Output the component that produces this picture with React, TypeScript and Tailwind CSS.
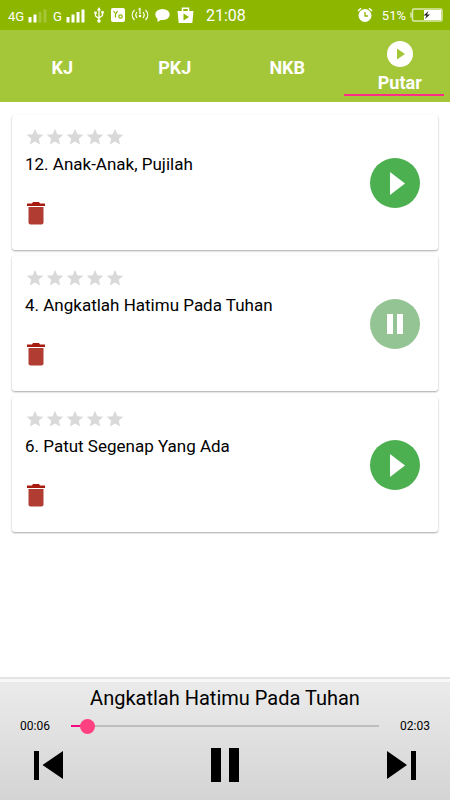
import { useState } from "react";

interface Song {
  id: number;
  number: number;
  title: string;
  playing: boolean;
}

const songs: Song[] = [
  { id: 1, number: 12, title: "Anak-Anak, Pujilah", playing: false },
  { id: 2, number: 4, title: "Angkatlah Hatimu Pada Tuhan", playing: true },
  { id: 3, number: 6, title: "Patut Segenap Yang Ada", playing: false },
];

const books = ["KJ", "PKJ", "NKB"];

const formatTime = (s: number) =>
  `${String(Math.floor(s / 60)).padStart(2, "0")}:${String(s % 60).padStart(2, "0")}`;

function Signal({ level }: { level: number }) {
  return (
    <svg width="19" height="18" viewBox="0 0 19 18" fill="#fff">
      {[0, 1, 2, 3].map((i) => (
        <rect key={i} x={i * 5 + 0.5} y={11 - i * 2.5} width="3" height={5.5 + i * 2.5} opacity={i < level ? 1 : 0.22} />
      ))}
    </svg>
  );
}

function StatusBar() {
  return (
    <div className="flex h-[30px] items-center bg-[#8db600] pl-2 pr-[7px] text-[13px] text-white">
      <span className="w-5 pt-1">4G</span>
      <Signal level={2} />
      <span className="ml-[6px] w-[13px] pt-1">G</span>
      <Signal level={4} />
      {/* usb */}
      <svg className="ml-2" width="12" height="16" viewBox="0 0 12 16" fill="none" stroke="#fff" strokeWidth="1.3">
        <path d="M6 3v10M2.500 6v3L6 11.500M9.500 5.500v3L6 11" />
        <path d="M6 0l2 3.500H4zM1.300 4.500h2.400v2.500H1.300zM8.300 4h2.400v2.500H8.300z" fill="#fff" stroke="none" />
        <circle cx="6" cy="14" r="1.800" fill="#fff" stroke="none" />
      </svg>
      <svg className="ml-[6px]" width="14" height="14" viewBox="0 0 14 14">
        <rect width="14" height="14" rx="2" fill="#fff" />
        <path d="M2.500 3l2 2.500M6.500 3l-2 3.500v3" stroke="#8db600" strokeWidth="1.200" fill="none" />
        <circle cx="9.500" cy="8.500" r="1.700" stroke="#8db600" strokeWidth="1.200" fill="none" />
      </svg>
      {/* hotspot */}
      <svg className="ml-[6px]" width="18" height="16" viewBox="0 0 18 16" fill="none" stroke="#fff" strokeWidth="1.200">
        <path d="M3.500 3C.5 6 .5 10 3.500 13M6 5c-1.600 2-1.600 4 0 6M14.500 3c3 3 3 7 0 10M12 5c1.600 2 1.600 4 0 6M7.500 2.500L9 1.500V7" />
        <circle cx="9" cy="9" r="1.300" fill="#fff" stroke="none" />
      </svg>
      <svg className="ml-[6px]" width="15" height="14" viewBox="0 0 15 14" fill="#fff">
        <ellipse cx="7.500" cy="6.500" rx="7.200" ry="5.500" />
        <path d="M2.500 9v5l5-3z" />
      </svg>
      <svg className="ml-[7px]" width="17" height="16" viewBox="0 0 17 16">
        <path d="M5.500 4V1.200h6V4" fill="none" stroke="#fff" strokeWidth="1.500" />
        <path d="M.5 4h16l-1.200 12H1.700z" fill="#fff" />
        <path d="M6.500 6.500v7l5.500-3.500z" fill="#8db600" />
      </svg>
      <span className="ml-3 pt-0.5 text-base">21:08</span>
      <svg className="ml-auto" width="16" height="16" viewBox="0 0 16 16" fill="none">
        <circle cx="8" cy="8.500" r="6.500" fill="#fff" />
        <path d="M1 4l3-2.800M15 4l-3-2.800" stroke="#fff" strokeWidth="1.500" />
        <path d="M8 5v4h3" stroke="#8db600" strokeWidth="1.300" />
      </svg>
      <span className="ml-[9px] pt-0.5">51%</span>
      <svg className="ml-1" width="33" height="14" viewBox="0 0 33 14">
        <rect x="2.500" y="1" width="29.500" height="12" rx="1.500" fill="none" stroke="#dbe9b0" strokeWidth="1.500" />
        <path d="M1 4.500v5" stroke="#dbe9b0" strokeWidth="1.500" />
        <rect x="14" y="2" width="17" height="10" fill="#fff" />
        <path d="M18.500 3l-5 4.500h3l-1.500 3.500 5-4.500h-3z" fill="#222" />
      </svg>
    </div>
  );
}

function TabBar() {
  return (
    <nav className="grid h-[72px] grid-cols-4 gap-3 bg-[#a4c639] pl-3 text-lg font-bold text-white">
      {books.map((book) => (
        <button key={book} className="pt-1">{book}</button>
      ))}
      <button className="flex flex-col items-center pt-2.5">
        <svg width="28" height="28" viewBox="0 0 28 28">
          <circle cx="14" cy="14" r="13" fill="#fff" />
          <path d="M11 8.500v11l8-5.500z" fill="#a4c639" />
        </svg>
        <span className="h-[26px] leading-[30px]">Putar</span>
        <span className="-ml-3 h-0.5 w-[100px] bg-[#ff2d87]" />
      </button>
    </nav>
  );
}

function SongCard({ song }: { song: Song }) {
  return (
    <li className="flex h-[135px] items-center justify-between rounded-[3px] bg-white pl-[13px] pr-[18px] shadow-[0_1px_2px_rgba(0,0,0,0.35)]">
      <div className="flex h-full flex-col items-start pt-3">
        <div className="flex" aria-label="Rating">
          {[1, 2, 3, 4, 5].map((n) => (
            <svg key={n} width="20" height="20" viewBox="0 0 24 24" fill="#d9d9d9">
              <path d="M12 17.270L18.180 21l-1.640-7.030L22 9.240l-7.190-.61L12 2 9.190 8.630 2 9.240l5.460 4.730L5.820 21z" />
            </svg>
          ))}
        </div>
        <h2 className="mt-[5px] text-[17px] leading-6 text-black">{song.number}. {song.title}</h2>
        <button className="ml-[2px] mt-[26px]" aria-label="Hapus">
          <svg width="18" height="23" viewBox="0 0 18 23">
            <path d="M6 0h6l1 1.500h5V4H0V1.500h5z" fill="#a81c10" />
            <path d="M1.500 5h15v15.500a2 2 0 0 1-2 2h-11a2 2 0 0 1-2-2z" fill="#b03c32" />
          </svg>
        </button>
      </div>
      <button aria-label={song.playing ? "Jeda" : "Putar"}>
        <svg width="50" height="50" viewBox="0 0 50 50">
          <circle cx="25" cy="25" r="25" fill={song.playing ? "#94c494" : "#4caf50"} />
          {song.playing ? (
            <path d="M17 15h6v20h-6zM27 15h6v20h-6z" fill="#fff" />
          ) : (
            <path d="M20 14v23l15-11.500z" fill="#fff" />
          )}
        </svg>
      </button>
    </li>
  );
}

function Player() {
  const duration = 123;
  const [time, setTime] = useState(6);

  return (
    <footer className="border-t-2 border-[#e4e4e4] bg-[#f8f8f8] pt-[3px]">
      <div className="bg-linear-to-b from-[#ebebeb] to-[#d4d4d4] pb-2.5 pt-0.5 text-black">
        <h1 className="text-center text-xl leading-7">Angkatlah Hatimu Pada Tuhan</h1>
        <div className="flex h-7 items-center justify-between px-5 text-xs">
          <span>{formatTime(time)}</span>
          <div className="mx-[21px] grid flex-1 items-center">
            <div className="col-start-1 row-start-1 h-0.5 bg-[#bdbdbd]">
              <div className="h-0.5 bg-[#f50a80]" style={{ width: `${(time / duration) * 100}%` }} />
            </div>
            <input
              type="range"
              aria-label="Posisi lagu"
              min={0}
              max={duration}
              value={time}
              onChange={(e) => setTime(Number(e.target.value))}
              className="col-start-1 row-start-1 -mx-[6px] h-4 appearance-none bg-transparent [&::-webkit-slider-thumb]:h-[15px] [&::-webkit-slider-thumb]:w-[15px] [&::-webkit-slider-thumb]:appearance-none [&::-webkit-slider-thumb]:rounded-full [&::-webkit-slider-thumb]:bg-[#ff4081]"
            />
          </div>
          <span>{formatTime(duration)}</span>
        </div>
        <div className="flex h-[50px] items-center justify-between px-[33px]">
          <button aria-label="Sebelumnya">
            <svg width="30" height="29" viewBox="0 0 30 29">
              <path d="M1 0h5v29H1zM30 0v28L9.500 14z" />
            </svg>
          </button>
          <button aria-label="Jeda">
            <svg width="30" height="34" viewBox="0 0 30 34">
              <path d="M1 0h10v34H1zM19 0h10v34H19z" />
            </svg>
          </button>
          <button aria-label="Berikutnya">
            <svg width="30" height="29" viewBox="0 0 30 29">
              <path d="M24 0h5v29h-5zM0 0v28l20-14z" />
            </svg>
          </button>
        </div>
      </div>
    </footer>
  );
}

export default function App() {
  return (
    <div className="flex min-h-screen flex-col bg-white font-['Roboto',sans-serif]">
      <StatusBar />
      <TabBar />
      <main className="flex-1 px-3 pt-[13px]">
        <ul className="flex flex-col gap-1.5">
          {songs.map((song) => (
            <SongCard key={song.id} song={song} />
          ))}
        </ul>
      </main>
      <Player />
    </div>
  );
}
